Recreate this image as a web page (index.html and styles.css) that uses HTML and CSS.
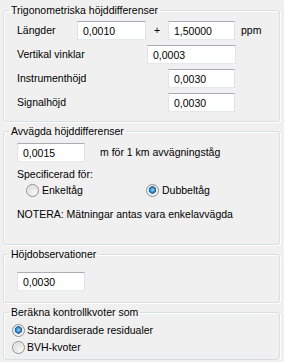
FILE: index.html
```html
<!DOCTYPE html>
<html lang="sv">
<head>
<meta charset="utf-8">
<title>Höjdinställningar</title>
<link rel="stylesheet" href="styles.css">
</head>
<body>
<div class="panel">
  <fieldset class="group">
    <legend>Trigonometriska höjddifferenser</legend>
    <div class="inner g1">
      <div class="row">
        <span class="lbl w60">Längder</span>
        <input class="field w69" type="text" value="0,0010" readonly>
        <span class="plus">+</span>
        <input class="field w67" type="text" value="1,50000" readonly>
        <span class="unit">ppm</span>
      </div>
      <div class="row">
        <span class="lbl w130">Vertikal vinklar</span>
        <input class="field w89" type="text" value="0,0003" readonly>
      </div>
      <div class="row">
        <span class="lbl w151">Instrumenthöjd</span>
        <input class="field w67" type="text" value="0,0030" readonly>
      </div>
      <div class="row">
        <span class="lbl w151">Signalhöjd</span>
        <input class="field w67" type="text" value="0,0030" readonly>
      </div>
    </div>
  </fieldset>

  <fieldset class="group">
    <legend>Avvägda höjddifferenser</legend>
    <div class="inner g2">
      <div class="row">
        <input class="field w68" type="text" value="0,0015" readonly>
        <span class="after">m för 1 km avvägningståg</span>
      </div>
      <div class="line spec">Specificerad för:</div>
      <div class="radios-inline">
        <label class="opt opt-first"><span class="radio"></span>Enkeltåg</label>
        <label class="opt"><span class="radio checked"></span>Dubbeltåg</label>
      </div>
      <div class="line note">NOTERA: Mätningar antas vara enkelavvägda</div>
    </div>
  </fieldset>

  <fieldset class="group">
    <legend>Höjdobservationer</legend>
    <div class="inner g3">
      <input class="field w68" type="text" value="0,0030" readonly>
    </div>
  </fieldset>

  <fieldset class="group">
    <legend>Beräkna kontrollkvoter som</legend>
    <div class="inner g4">
      <label class="opt stack"><span class="radio checked"></span>Standardiserade residualer</label>
      <label class="opt stack"><span class="radio"></span>BVH-kvoter</label>
    </div>
  </fieldset>
</div>
</body>
</html>
```

FILE: styles.css
```css
* { box-sizing: border-box; }

html, body {
  margin: 0;
  padding: 0;
  background: #f0f0f0;
}

body {
  font-family: "Liberation Sans", Arial, sans-serif;
  font-size: 10.5px;
  line-height: 13px;
  color: #000;
}

.panel {
  display: flex;
  flex-direction: column;
  padding-top: 1px;
}

.group {
  margin: 3px 4px 0 3px;
  padding: 0;
  min-width: 0;
  border: 1px solid #d5dfe5;
  border-radius: 3px;
  box-shadow: inset 1px 1px 0 #fff, 1px 1px 0 #fff;
}

.group legend {
  margin-left: 5px;
  padding: 0 2px;
  line-height: 13px;
  height: 13px;
}

.inner {
  display: flex;
  flex-direction: column;
}

.g1 { padding: 4px 0 9px 13px; gap: 5px; }
.g2 { padding: 5px 0 23px 13px; }
.g3 { padding: 11px 0 11px 13px; }
.g4 { padding: 3px 0 3px 8px; }

.row {
  display: flex;
  align-items: center;
  height: 19px;
}

.lbl { flex: none; }
.w60 { width: 60px; }
.w130 { width: 130px; }
.w151 { width: 151px; }

.field {
  flex: none;
  height: 19px;
  margin: 0;
  padding: 0 0 0 5px;
  font: inherit;
  color: #000;
  background: #fff;
  border: 1px solid #e2e3ea;
  border-top-color: #abadb3;
  border-bottom-color: #e3e9ef;
  border-radius: 0;
  outline: none;
}
.w67 { width: 67px; }
.w68 { width: 68px; }
.w69 { width: 69px; }
.w89 { width: 89px; }

.plus {
  flex: none;
  width: 22px;
  text-align: center;
}

.unit { margin-left: 6px; }
.after { margin-left: 15px; }

.line { height: 13px; }
.spec { margin-top: 6px; }
.note { margin-top: 11px; }

.radios-inline {
  display: flex;
  margin-top: 3px;
  margin-left: 9px;
  height: 13px;
}

.opt {
  display: flex;
  align-items: center;
  gap: 3px;
}
.opt-first { width: 120px; }

.stack { height: 17px; gap: 2px; }

.radio {
  flex: none;
  width: 13px;
  height: 13px;
  border-radius: 50%;
  border: 1px solid #8f8f8f;
  background: radial-gradient(circle at 65% 70%, #f8f8f8 0%, #e6e6e6 45%, #cfcfcf 100%);
  box-shadow: inset 0 0 0 1px #f4f4f4;
  position: relative;
}

.radio.checked {
  background:
    radial-gradient(circle at 50% 45%, #9fd4f6 0px, #3c94d0 2px, #1d5d98 3.5px, rgba(0,0,0,0) 4px),
    radial-gradient(circle at 65% 70%, #f8f8f8 0%, #e6e6e6 45%, #cfcfcf 100%);
}
```
